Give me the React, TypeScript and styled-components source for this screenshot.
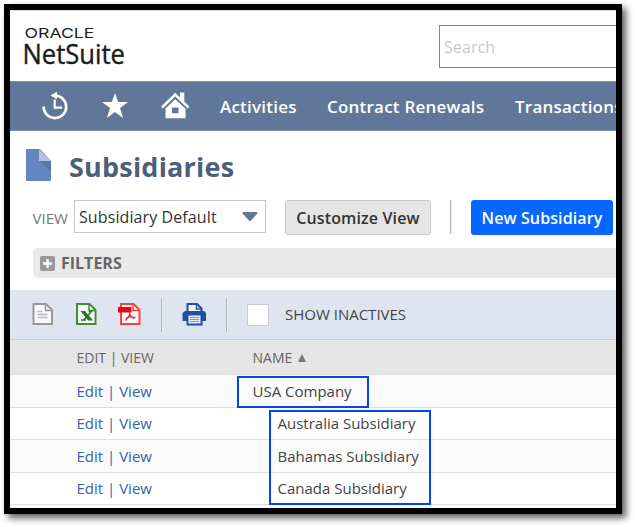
import React from "react";
import styled, { createGlobalStyle } from "styled-components";

const GlobalStyle = createGlobalStyle`
  * { box-sizing: border-box; }
  body { margin: 0; background: #fff; overflow: hidden; font-family: "Open Sans", "Noto Sans", sans-serif; }
`;

const Page = styled.div`
  width: 635px;
  height: 527px;
  padding: 4px;
`;

const Frame = styled.main`
  width: 618px;
  height: 510px;
  border: 6px solid #000;
  background: #fff;
  box-shadow: 4px 4px 7px rgba(0, 0, 0, 0.65);
  overflow: hidden;
  white-space: nowrap;
`;

const Header = styled.header`
  display: flex;
  justify-content: space-between;
  height: 71px;
  padding: 15px 0 0 13px;
  border-top: 1px solid #ddd;
`;

const Logo = styled.svg`
  display: block;
  width: 106px;
  height: 44px;
  overflow: visible;
`;

const SearchBox = styled.div`
  width: 177px;
  height: 43px;
  margin-top: -1px;
  padding-left: 4px;
  border: 1px solid #858585;
  border-right: 0;
  line-height: 42px;
  font-size: 16px;
  letter-spacing: 0.1px;
  color: #c8c8c8;
`;

const Nav = styled.nav`
  display: flex;
  align-items: center;
  height: 50px;
  padding-left: 31px;
  background: #607799;
  border-top: 1px solid #7c90ad;
  border-bottom: 1px solid #7c90ad;
  color: #fff;
`;

const NavIcon = styled.svg<{ $gap: number }>`
  flex: none;
  width: 30px;
  height: 30px;
  margin-right: ${(p) => p.$gap}px;
`;

const NavLink = styled.a<{ $width: number }>`
  flex: none;
  width: ${(p) => p.$width}px;
  padding-top: 2px;
  font-size: 17px;
  line-height: 24px;
  font-weight: 600;
  letter-spacing: 0.22px;
`;

const TitleRow = styled.div`
  display: flex;
  height: 69px;
  padding: 17px 0 0 16px;
`;

const TitleIcon = styled.svg`
  width: 26px;
  height: 34px;
`;

const Title = styled.h1`
  margin: 0 0 0 17px;
  font-size: 27px;
  line-height: 38px;
  font-weight: 700;
  letter-spacing: 0.2px;
  color: #4d5f79;
`;

const Controls = styled.div`
  display: flex;
  height: 48px;
  padding-left: 22.5px;
`;

const ViewLabel = styled.label`
  width: 41.5px;
  padding-top: 1px;
  font-size: 15px;
  line-height: 35px;
  color: #777;
`;

const Select = styled.div`
  display: flex;
  align-items: center;
  justify-content: space-between;
  width: 192px;
  height: 33px;
  padding: 0 7px 0 4px;
  border: 1px solid #c6c6c6;
  font-size: 16px;
  letter-spacing: 0.1px;
  color: #333;
`;

const Button = styled.button<{ $primary?: boolean }>`
  width: ${(p) => (p.$primary ? 142 : 146)}px;
  height: 35px;
  margin-left: 19px;
  padding: 1px 0 0;
  border: ${(p) => (p.$primary ? "0" : "1px solid #c9c9c9")};
  border-radius: 3px;
  background: ${(p) => (p.$primary ? "#0668ff" : "#e5e5e5")};
  color: ${(p) => (p.$primary ? "#fff" : "#333")};
  font: 600 16px "Open Sans", sans-serif;
  letter-spacing: 0.12px;
  white-space: nowrap;
`;

const Divider = styled.span<{ $left: number; $right?: number }>`
  flex: none;
  width: 2px;
  height: 34px;
  margin: 0 ${(p) => p.$right || 0}px 0 ${(p) => p.$left}px;
  border-left: 1px solid #b2b5b8;
  border-right: 1px solid #e9ebed;
`;

const Filters = styled.div`
  display: flex;
  align-items: center;
  height: 30px;
  margin-left: 23px;
  padding-left: 7px;
  gap: 6px;
  border-radius: 5px 0 0 5px;
  background: #e9e9e9;
  font-size: 16px;
  font-weight: 700;
  color: #666;
`;

const PlusBox = styled.svg`
  width: 15px;
  height: 15px;
`;

const Toolbar = styled.div`
  display: flex;
  align-items: center;
  height: 49px;
  margin-top: 12px;
  padding-left: 22px;
  background: #dfe5f0;
`;

const ToolIcon = styled.svg<{ $gap: number }>`
  flex: none;
  width: 25px;
  height: 24px;
  margin: 0 ${(p) => p.$gap}px 2px 0;
`;

const Checkbox = styled.span`
  width: 22px;
  height: 22px;
  margin: 0 16px 0 -1px;
  background: #fff;
  border: 1px solid #c9cbd0;
`;

const CheckLabel = styled.span`
  padding-bottom: 2px;
  font-size: 15px;
  color: #444;
`;

const Row = styled.div<{ $kind: "head" | "odd" | "even" }>`
  display: grid;
  grid-template-columns: 176px 1fr;
  height: ${(p) => (p.$kind === "head" ? 36 : 32.5)}px;
  padding: 0 0 ${(p) => (p.$kind === "head" ? 0 : 0.5)}px 66.5px;
  align-items: center;
  border-top: ${(p) => (p.$kind === "head" ? "1px solid #cdcdcd" : "0")};
  border-bottom: 1px solid #dedede;
  background: ${(p) => ({ head: "#e5e5e5", odd: "#fafafa", even: "#fff" })[p.$kind]};
  font-size: ${(p) => (p.$kind === "head" ? 14 : 15)}px;
  color: ${(p) => (p.$kind === "head" ? "#666" : "#444")};
`;

const Links = styled.span`
  color: #3763a5;
`;

const Name = styled.span<{ $child?: boolean }>`
  padding-left: ${(p) => (p.$child ? 25 : 0)}px;
`;

const SortArrow = styled.svg`
  width: 8px;
  height: 8px;
  margin-left: 6px;
  vertical-align: 1px;
`;

const Records = styled.section`
  position: relative;
`;

const Highlight = styled.span<{ $x: number; $y: number; $w: number; $h: number }>`
  position: absolute;
  left: ${(p) => p.$x}px;
  top: ${(p) => p.$y}px;
  width: ${(p) => p.$w}px;
  height: ${(p) => p.$h}px;
  border: 2px solid #0645ee;
`;

const records = [
  { name: "USA Company", child: false },
  { name: "Australia Subsidiary", child: true },
  { name: "Bahamas Subsidiary", child: true },
  { name: "Canada Subsidiary", child: true },
];

function SheetOutline({ color }: { color: string }) {
  return (
    <>
      <path d="M4 2h12.500l6 6v14h-18.500z" fill="#f8f9fb" stroke={color} strokeWidth="2" />
      <path d="M16 2v6.500h6.500" fill="none" stroke={color} strokeWidth="1.500" />
    </>
  );
}

export default function App() {
  return (
    <Page>
      <GlobalStyle />
      <Frame>
        <Header>
          <Logo viewBox="0 0 106 44" fill="#1c1c1a" aria-label="Oracle NetSuite">
            <text x="1.500" y="12" fontFamily="Inter" fontSize="13.500" fontWeight="400" textLength="70" lengthAdjust="spacingAndGlyphs">ORACLE</text>
            <text x="-0.500" y="38" fontFamily="Open Sans" fontSize="28" textLength="102.500" lengthAdjust="spacingAndGlyphs" stroke="#1c1c1a" strokeWidth="0.400">NetSuite</text>
          </Logo>
          <SearchBox>Search</SearchBox>
        </Header>
        <Nav>
          <NavIcon $gap={30} viewBox="0 0 30 30" fill="none" stroke="currentColor">
            <path d="M2.600 15.500a11.300 11.300 0 1 0 11.300-11" strokeWidth="2.600" />
            <path d="M9.500 4.500l6.500-3.800v7.600z" fill="currentColor" stroke="none" />
            <path d="M13.700 8.500v8.200h7.300" strokeWidth="2.200" />
          </NavIcon>
          <NavIcon $gap={30} viewBox="0 0 30 30" fill="currentColor">
            <path d="M14 2l3.100 9h9.900l-8 5.900 3.100 10.100-8.100-6.100-8.100 6.100 3.100-10.100-8-5.900h9.900z" />
          </NavIcon>
          <NavIcon $gap={29} viewBox="0 0 30 30" fill="none">
            <path d="M1 16.500L14.200 3.500 27.500 16.500" stroke="currentColor" strokeWidth="2.500" />
            <path d="M19 1.500h4.300v9l-4.300-4z" fill="currentColor" />
            <path fillRule="evenodd" d="M4.500 17.500L14.200 8.200l10.300 9.500V27.300h-20zM11 16.500v5.800h6.500v-5.800z" fill="currentColor" />
          </NavIcon>
          <NavLink $width={107}>Activities</NavLink>
          <NavLink $width={188}>Contract Renewals</NavLink>
          <NavLink $width={120}>Transactions</NavLink>
        </Nav>
        <TitleRow>
          <TitleIcon viewBox="0 0 26 34">
            <path d="M1 1h13l11 12v19a1 1 0 0 1-1 1H1a1 1 0 0 1-1-1V2a1 1 0 0 1 1-1z" fill="#6486bf" />
            <path d="M13 1l12 12H13z" fill="#b0c2df" />
            <path d="M13 13h12v11z" fill="#5778ae" />
          </TitleIcon>
          <Title>Subsidiaries</Title>
        </TitleRow>
        <Controls>
          <ViewLabel>VIEW</ViewLabel>
          <Select>
            Subsidiary Default
            <svg width="16" height="10" viewBox="0 0 16 10">
              <path d="M1 0h14q1 0.800 0 2L9 8.500q-1 1-2 0L1 2q-1-1.200 0-2z" fill="#607799" />
            </svg>
          </Select>
          <Button>Customize View</Button>
          <Divider $left={19} />
          <Button $primary>New Subsidiary</Button>
        </Controls>
        <Filters>
          <PlusBox viewBox="0 0 15 15">
            <rect width="15" height="15" rx="2" fill="#999" />
            <path d="M7.500 3v9M3 7.500h9" stroke="#fff" strokeWidth="2.400" />
          </PlusBox>
          FILTERS
        </Filters>
        <Toolbar>
          <ToolIcon $gap={18} viewBox="2.5 0 25 24">
            <SheetOutline color="#999" />
            <path d="M8 9.500h5M8 12.500h10M8 15.500h10" stroke="#bbb" strokeWidth="1.300" />
          </ToolIcon>
          <ToolIcon $gap={18} viewBox="2 0 25 24">
            <SheetOutline color="#438b38" />
            <path d="M7.500 9h4.500l8 9.500h-5z" fill="#237b2a" />
            <path d="M16 9.500h3.500M18 10l-7.500 8M8 18h5" stroke="#237b2a" strokeWidth="1.500" />
          </ToolIcon>
          <ToolIcon $gap={18} viewBox="1 0 25 24">
            <SheetOutline color="#ff413c" />
            <path d="M1 5h13.500v5.500H1z" fill="#d80b12" />
            <path d="M12 10c1.800 0 1 4-3.500 8.500M9 16.300c3-1.700 6-1.700 9.500-.6M12.500 11.500c.5 2 2 3.700 4.500 5" fill="none" stroke="#f02524" strokeWidth="1.200" />
          </ToolIcon>
          <Divider $left={0} $right={19} />
          <ToolIcon $gap={19} viewBox="0 0 25 24">
            <path d="M5.500 10V2h9.500l4.500 4.500V10" fill="#edf2fb" stroke="#21509a" strokeWidth="2" />
            <path d="M14.500 2v5h5" fill="none" stroke="#21509a" strokeWidth="1.500" />
            <path d="M3 9h19l2 2v8H0.500v-8z" fill="#21509a" />
            <path d="M5.500 12.500h14v10h-14z" fill="#e8eef8" stroke="#21509a" strokeWidth="2" />
            <path d="M8 15.500h9M8 17.500h9M8 19.500h9" stroke="#779ac7" />
          </ToolIcon>
          <Divider $left={0} $right={20} />
          <Checkbox />
          <CheckLabel>SHOW INACTIVES</CheckLabel>
        </Toolbar>
        <Row $kind="head">
          <span>EDIT | VIEW</span>
          <span>
            NAME
            <SortArrow viewBox="0 0 8 8">
              <path d="M4 0l4 8H0z" fill="#777" />
            </SortArrow>
          </span>
        </Row>
        <Records>
          {records.map((r, i) => (
            <Row key={r.name} $kind={i % 2 ? "even" : "odd"}>
              <Links>Edit | View</Links>
              <Name $child={r.child}>{r.name}</Name>
            </Row>
          ))}
          <Highlight $x={227} $y={0.5} $w={132} $h={32} />
          <Highlight $x={259} $y={35} $w={162} $h={95} />
        </Records>
      </Frame>
    </Page>
  );
}
